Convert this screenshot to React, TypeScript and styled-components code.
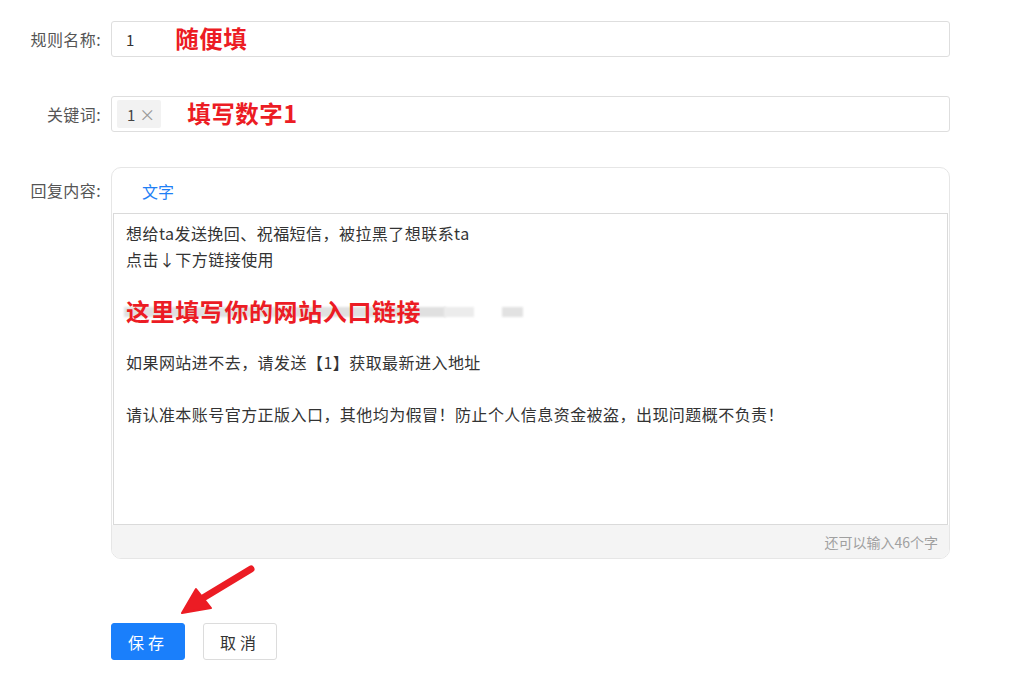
import React from "react";
import styled, { createGlobalStyle } from "styled-components";

const GlobalStyle = createGlobalStyle`
  html, body { margin: 0; padding: 0; background: #fff; }
  body { font-family: "Noto Sans CJK SC", "Noto Sans", sans-serif; color: #333; }
  * { box-sizing: border-box; }
`;

const Page = styled.div`
  position: relative;
  width: 1024px;
  height: 679px;
  padding-top: 21px;
  overflow: hidden;
`;

const Form = styled.div`
  display: flex;
  flex-direction: column;
`;

const Row = styled.div<{ $mt?: number }>`
  display: grid;
  grid-template-columns: 101px 839px;
  column-gap: 10px;
  align-items: start;
  margin-top: ${(p) => p.$mt ?? 0}px;
`;

const Label = styled.div<{ $h: number }>`
  height: ${(p) => p.$h}px;
  display: flex;
  align-items: center;
  justify-content: flex-end;
  font-size: 16px;
  letter-spacing: 0.4px;
  color: #555;
  white-space: nowrap;
`;

const InputBox = styled.div<{ $pl?: number }>`
  height: 36px;
  border: 1px solid #dedede;
  border-radius: 3px;
  display: flex;
  align-items: center;
  padding-left: ${(p) => p.$pl ?? 14}px;
  font-size: 15px;
  color: #333;
`;

const Annot = styled.span<{ $ml: number }>`
  margin-left: ${(p) => p.$ml}px;
  color: #ec1c24;
  font-weight: 700;
  font-size: 23.5px;
  letter-spacing: 0.5px;
  line-height: 1;
`;

const Tag = styled.span`
  height: 28px;
  display: inline-flex;
  align-items: center;
  gap: 4px;
  padding: 0 6px 0 10px;
  background: #f2f2f2;
  border-radius: 2px;
  font-size: 15px;
  color: #444;
`;

const TagClose = styled.span`
  color: #999;
  font-size: 16px;
`;

const Card = styled.div`
  height: 392px;
  border: 1px solid #e6e6e6;
  border-radius: 10px;
  overflow: hidden;
  display: flex;
  flex-direction: column;
`;

const CardHead = styled.div`
  height: 45px;
  display: flex;
  align-items: center;
  padding-left: 30px;
`;

const TabText = styled.span`
  color: #1f7ff5;
  font-size: 16px;
`;

const Body = styled.div`
  height: 312px;
  margin: 0 1px;
  border: 1px solid #dadada;
  padding: 7px 12px 0 12px;
  font-size: 16px;
  letter-spacing: 0.45px;
  line-height: 25.8px;
  color: #333;
`;

const Line = styled.div`
  height: 25.8px;
  white-space: nowrap;
`;

const LinkLine = styled.div`
  position: relative;
  height: 25.8px;
`;

const Redact = styled.div<{ $l: number; $w: number; $c: string }>`
  position: absolute;
  left: ${(p) => p.$l}px;
  width: ${(p) => p.$w}px;
  top: 9px;
  height: 10px;
  background: ${(p) => p.$c};
  filter: blur(1px);
`;

const LinkAnnot = styled.span`
  position: relative;
  color: #ec1c24;
  font-weight: 700;
  font-size: 24px;
  letter-spacing: 0.6px;
  line-height: 25.8px;
`;

const Footer = styled.div`
  flex: 1;
  background: #f4f4f4;
  display: flex;
  align-items: center;
  justify-content: flex-end;
  padding-right: 11px;
  font-size: 14px;
  color: #a0a0a0;
`;

const Buttons = styled.div`
  display: flex;
  gap: 18px;
  margin-top: 64px;
  margin-left: 111px;
`;

const Btn = styled.button<{ $primary?: boolean }>`
  width: 74px;
  height: 37px;
  border-radius: 3px;
  font-family: inherit;
  font-size: 16px;
  letter-spacing: 4px;
  padding-left: 6px;
  cursor: pointer;
  background: ${(p) => (p.$primary ? "#1a7ffb" : "#fff")};
  color: ${(p) => (p.$primary ? "#fff" : "#333")};
  border: 1px solid ${(p) => (p.$primary ? "#1a7ffb" : "#dcdcdc")};
`;

const ArrowSvg = styled.svg`
  position: absolute;
  left: 0;
  top: 0;
  pointer-events: none;
`;

export default function App() {
  return (
    <Page>
      <GlobalStyle />
      <Form>
        <Row>
          <Label $h={36}>规则名称:</Label>
          <InputBox>
            <span>1</span>
            <Annot $ml={41}>随便填</Annot>
          </InputBox>
        </Row>
        <Row $mt={39}>
          <Label $h={36}>关键词:</Label>
          <InputBox $pl={5}>
            <Tag>
              1<TagClose>×</TagClose>
            </Tag>
            <Annot $ml={26}>填写数字1</Annot>
          </InputBox>
        </Row>
        <Row $mt={35}>
          <Label $h={46}>回复内容:</Label>
          <Card>
            <CardHead>
              <TabText>文字</TabText>
            </CardHead>
            <Body>
              <Line>想给ta发送挽回、祝福短信，被拉黑了想联系ta</Line>
              <Line>点击↓下方链接使用</Line>
              <Line />
              <LinkLine>
                <Redact $l={-2} $w={322} $c="#e0e0e0" />
                <Redact $l={318} $w={30} $c="#ececec" />
                <Redact $l={376} $w={21} $c="#e2e2e2" />
                <LinkAnnot>这里填写你的网站入口链接</LinkAnnot>
              </LinkLine>
              <Line />
              <Line>如果网站进不去，请发送【1】获取最新进入地址</Line>
              <Line />
              <Line>请认准本账号官方正版入口，其他均为假冒！防止个人信息资金被盗，出现问题概不负责！</Line>
            </Body>
            <Footer>还可以输入46个字</Footer>
          </Card>
        </Row>
      </Form>
      <Buttons>
        <Btn $primary>保存</Btn>
        <Btn>取消</Btn>
      </Buttons>
      <ArrowSvg width="1024" height="679" viewBox="0 0 1024 679">
        <line x1="251" y1="569" x2="203" y2="598" stroke="#ec1c24" strokeWidth="7" strokeLinecap="round" />
        <polygon points="182,613 196,589 211,608" fill="#ec1c24" stroke="#ec1c24" strokeWidth="2" strokeLinejoin="round" />
      </ArrowSvg>
    </Page>
  );
}
